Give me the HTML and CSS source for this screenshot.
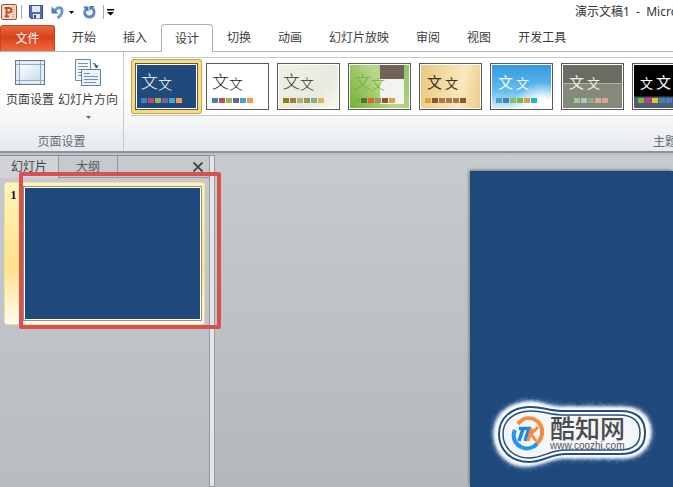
FILE: index.html
```
<!DOCTYPE html>
<html lang="zh-CN">
<head>
<meta charset="utf-8">
<title>演示文稿1</title>
<link rel="stylesheet" href="styles.css">
</head>
<body>
<header class="titlebar">
  <div class="quick">
    <svg class="app" width="16" height="18" viewBox="0 0 16 18" aria-hidden="true"><rect x=".5" y="1.500" width="15" height="15" rx="1.500" fill="#f7d9c8" stroke="#a44f3c"/><path d="M11 4h3M11 6.500h3M11 9h3M11 11.500h3M11 14h3" stroke="#ef9c74"/><path d="M2 3h9v12H2z" fill="#fbe6d6"/><path d="M5.500 13.500V5h2.500a2.300 2.300 0 0 1 0 4.600H5.500M3.500 13.500H8M3.500 5h2" fill="none" stroke="#c8481c" stroke-width="2"/></svg>
    <span class="rule"></span>
    <button class="tool save" aria-label="保存"><svg width="14" height="14" viewBox="0 0 14 14"><path d="M.5.5h13v13H2L.5 12z" fill="#5169b5" stroke="#3c4a93"/><path d="M3 1h8v6H3z" fill="#dfeafa"/><path d="M4 9h7v4.500H4z" fill="#e4e9f3"/><path d="M5 10h2v3.500H5z" fill="#34488c"/></svg></button>
    <button class="tool undo" aria-label="撤销"><svg width="13" height="14" viewBox="0 0 13 14"><path d="M4 5.500C6 2 11 1.500 11 6c0 3-2 5.500-4.500 7" fill="none" stroke="#6a97d6" stroke-width="3"/><path d="M.5 1.500v7h7z" fill="#4a7cc4"/></svg></button>
    <svg class="drop" width="5" height="3" viewBox="0 0 5 3" aria-hidden="true"><path d="M0 0h5L2.500 3z"/></svg>
    <button class="tool redo" aria-label="重复"><svg width="13" height="14" viewBox="0 0 13 14"><path d="M3 4C0 8 2.500 12 6.500 12c4.500 0 6-5 3-9" fill="none" stroke="#5a88cc" stroke-width="2.800"/><path d="M0 1.500h5.500V7z" fill="#4676bd"/><path d="M6.500 6V1h5z" fill="#4676bd"/></svg></button>
    <span class="rule"></span>
    <button class="tool" aria-label="自定义快速访问工具栏"><svg width="7" height="7" viewBox="0 0 7 7"><path d="M0 0h7v1.400H0zM0 3h7L3.500 6.500z"/></svg></button>
  </div>
  <h1 class="title">演示文稿1&nbsp; -&nbsp; Microsoft</h1>
</header>
<nav class="tabs">
  <button class="file">文件</button>
  <button class="tab">开始</button>
  <button class="tab">插入</button>
  <button class="tab active">设计</button>
  <button class="tab">切换</button>
  <button class="tab">动画</button>
  <button class="tab">幻灯片放映</button>
  <button class="tab">审阅</button>
  <button class="tab">视图</button>
  <button class="tab">开发工具</button>
</nav>
<section class="ribbon">
  <div class="group setup">
    <div class="commands">
      <button class="command"><svg width="30" height="26" viewBox="0 0 30 26" aria-hidden="true"><defs><linearGradient id="pg" x2="1" y2="1"><stop stop-color="#fff"/><stop offset="1" stop-color="#c9dced"/></linearGradient></defs><rect x=".5" y=".5" width="29" height="24" fill="#e3ecf5" stroke="#60788f"/><path d="M4.500 4.500h21v16h-21z" fill="url(#pg)"/><path d="M4.500 1v23M25.500 1v23M1 4.500h28M1 20.500h28" stroke="#8fabc6"/></svg><span>页面设置</span></button>
      <button class="command"><svg width="28" height="28" viewBox="0 0 28 28" aria-hidden="true"><path d="M1.500.5h15v21h-15z" fill="#f1f6fb" stroke="#6c88a6"/><path d="M4 4.500h10M4 7.500h10M4 10.500h4M4 13.500h3M4 16.500h3" stroke="#7796b8"/><path d="M7.500 10.500h19v16h-19z" fill="#eaf2fb" stroke="#6581a0"/><path d="M10 14.500h6M10 17.500h14M10 20.500h14M10 23.500h12" stroke="#7193b9"/><path d="M19 4.500q3 0 3.500 3" fill="none" stroke="#355c8d" stroke-width="1.200"/><path d="M20 6.500h5l-2.500 3z" fill="#355c8d"/></svg><span>幻灯片方向</span><svg class="drop" width="5" height="3" viewBox="0 0 5 3" aria-hidden="true"><path d="M0 0h5L2.500 3z" fill="#666"/></svg></button>
    </div>
    <div class="caption">页面设置</div>
  </div>
  <div class="group themes">
    <div class="gallery">
      <button class="theme selected"><span class="art navy"><span class="sample">文<small>文</small></span><span class="swatches"><i class="c1"></i><i class="c2"></i><i class="c3"></i><i class="c4"></i><i class="c5"></i><i class="c6"></i></span></span></button>
      <button class="theme"><span class="art white"><span class="sample">文<small>文</small></span><span class="swatches"><i class="c1"></i><i class="c2"></i><i class="c3"></i><i class="c4"></i><i class="c5"></i><i class="c6"></i></span></span></button>
      <button class="theme"><span class="art cream"><span class="sample">文<small>文</small></span><span class="swatches"><i class="olive"></i><i class="rust"></i><i class="sand"></i><i class="moss"></i><i class="sage"></i><i class="straw"></i></span></span></button>
      <button class="theme"><span class="art green"><span class="sample">文<small>文</small></span><span class="swatches"><i class="lime"></i><i class="slate"></i><i class="orange"></i><i class="moss"></i><i class="brown"></i><i class="gold"></i></span></span></button>
      <button class="theme"><span class="art tan"><span class="sample brush">文<small>文</small></span><span class="swatches"><i class="gold"></i><i class="brown"></i><i class="rust"></i><i class="rust"></i><i class="rust"></i><i class="brown"></i></span></span></button>
      <button class="theme"><span class="art sky"><span class="sample brush">文<small>文</small></span><span class="swatches"><i class="c5"></i><i class="c1"></i><i class="c3"></i><i class="lime"></i><i class="gold"></i><i class="aqua"></i></span></span></button>
      <button class="theme"><span class="art stone"><span class="sample brush">文<small>文</small></span><span class="swatches"><i class="fern"></i><i class="mint"></i><i class="mist"></i><i class="sage"></i><i class="peach"></i><i class="rose"></i></span></span></button>
      <button class="theme"><span class="art black"><span class="sample brush"><small>文</small>文</span><span class="swatches"><i class="lime"></i><i class="pink"></i><i class="yellow"></i><i class="c1"></i><i class="c1"></i><i class="c4"></i></span></span></button>
    </div>
    <div class="caption">主题</div>
  </div>
</section>
<main class="workspace">
  <aside class="pane">
    <div class="pane-tabs">
      <button class="pane-tab current">幻灯片</button>
      <button class="pane-tab">大纲</button>
      <button class="close" aria-label="关闭"><svg width="10" height="10" viewBox="0 0 10 10"><path d="M.5.5l9 9M9.500.5l-9 9" stroke="#414447" stroke-width="1.800"/></svg></button>
    </div>
    <div class="slide-item">
      <span class="number">1</span>
      <div class="thumb"></div>
      <div class="marker"></div>
    </div>
  </aside>
  <div class="splitter"></div>
  <div class="canvas">
    <div class="slide"></div>
  </div>
  <div class="watermark">
    <svg class="halo" width="180" height="84" viewBox="0 0 180 84" aria-hidden="true">
      <defs><filter id="spray" x="-10%" y="-20%" width="120%" height="140%"><feTurbulence type="fractalNoise" baseFrequency=".7" numOctaves="2" seed="4" result="n"/><feDisplacementMap in="SourceGraphic" in2="n" scale="14" xChannelSelector="R" yChannelSelector="G"/><feGaussianBlur stdDeviation=".8"/></filter>
      <filter id="soft" x="-10%" y="-20%" width="120%" height="140%"><feGaussianBlur stdDeviation="1.500"/></filter></defs>
      <path d="M40 10C54 8 62 15 76 15h60c19 0 29 11 29 25s-10 26-29 26H78c-12 0-24 8-38 8C21 74 8 60 8 42S21 12 40 10z" fill="#a9c0e2" stroke="#8ba8d2" stroke-opacity=".5" stroke-width="5" filter="url(#spray)"/>
      <path d="M40 10C54 8 62 15 76 15h60c19 0 29 11 29 25s-10 26-29 26H78c-12 0-24 8-38 8C21 74 8 60 8 42S21 12 40 10z" fill="#fff" filter="url(#soft)"/>
      <g fill="none" stroke="#244d84" stroke-width="2"><path d="M42 15C55 14 62 19 76 19h58c17 0 25 8 25 22s-8 21-25 21H80c-15 0-24 8-37 8C25 70 13 58 13 42S25 16 42 15z"/><path d="M43 19c12-1 20 4 33 4h57c14 0 21 6 21 18s-7 17-21 17H79c-14 0-23 8-36 8C28 66 17 56 17 42s11-22 26-23z" fill="#f4f6fa" stroke-width="1.500"/></g>
      <g fill="none"><path d="M32 32C41 20 58 28 56 42c-1 5-3 8-6 10" stroke="#f58a42" stroke-width="4"/><path d="M29 38c-3 6-1 13 6 17 6 3 12 1 16-3" stroke="#2196f3" stroke-width="4"/><path d="M33 36.500h10l-4 12.500M37 37l-4 12" stroke="#1987e8" stroke-width="3.500"/><path d="M52 35l-7 7 5 7M45.500 36L42 49" stroke="#f58a42" stroke-width="3"/></g>
    </svg>
    <div class="brand"><strong>酷知网</strong><a href="#">www.coozhi.com</a></div>
  </div>
</main>
</body>
</html>
```
FILE: styles.css
```
* { box-sizing: border-box; }
html, body { height: 100%; }
body {
  margin: 0;
  display: flex;
  flex-direction: column;
  overflow: hidden;
  background: #fff;
  color: #3c3c3c;
  font: 12px/16px "Noto Sans", "Noto Sans CJK SC", sans-serif;
}
button { margin: 0; padding: 0; border: 0; background: none; color: inherit; font: inherit; white-space: nowrap; }
svg { display: block; flex: none; }

.titlebar { display: flex; flex: none; height: 24px; align-items: center; justify-content: space-between; overflow: hidden; }
.quick { display: flex; flex: none; align-items: center; padding-left: 1px; }
.rule { width: 1px; height: 14px; margin: 0 7px 0 4px; background: #aaa; }
.undo { margin-left: 8px; }
.quick .drop { margin: 0 9px 0 5px; }
.redo + .rule { margin: 0 3px 0 7px; }
.title { flex: none; width: 98px; margin: 0; color: #333; font-size: 12px; font-weight: 400; white-space: nowrap; }

.tabs { display: flex; flex: none; gap: 1px; height: 28px; border-bottom: 1px solid #b3b5b9; }
.file { width: 55px; margin: 1px 3px 0 0; border: 1px solid #c44522; border-bottom: 0; border-radius: 3px 3px 0 0; background: linear-gradient(#e86b40, #da401b 45%, #f0693b); color: #fff; }
.tab { padding: 0 13px; }
.tab.active { height: 28px; border: 1px solid #aeb1b6; border-bottom: 0; border-radius: 4px 4px 0 0; background: #fff; }

.ribbon { display: flex; flex: none; height: 101px; overflow: hidden; background: linear-gradient(#fff 45%, #e6e9ed); border-bottom: 2px solid #8e949c; }
.group { display: flex; flex: none; flex-direction: column; justify-content: space-between; }
.setup { width: 124px; border-right: 1px solid #c7cbd0; }
.themes { width: 1075px; padding: 5px 0 0 7px; }
.caption { color: #626b76; text-align: center; padding-bottom: 1px; }
.commands { display: flex; gap: 4px; padding: 7px 0 0 6px; }
.command { display: flex; flex-direction: column; align-items: center; }
.command svg { height: 28px; }
.command span { margin-top: 5px; }
.command .drop { height: 3px; margin-top: 8px; }
.gallery { display: flex; height: 59px; align-items: center; gap: 1px; border: 1px solid #c6c9ce; border-width: 1px 0; background: #fff; }
.theme { flex: none; padding: 4px; margin-right: -1px; border-radius: 3px; }
.theme.selected { background: #f7dc79; box-shadow: inset 0 0 0 1px #c9a950; }
.art { display: flex; flex-direction: column; justify-content: space-between; width: 63px; height: 47px; padding: 5px 5px 6px; border: 1px solid #5a5a5a; box-shadow: inset 0 0 0 1px #fff; text-align: left; }
.sample { display: flex; align-items: flex-end; height: 26px; font-size: 17px; line-height: 26px; font-weight: 300; }
.sample small { font-size: 14px; line-height: 23px; }
.brush { padding-left: 2px; gap: 3px; font-size: 15px; font-weight: 400; }
.brush small { font-size: 13px; }
.swatches { display: flex; gap: 1px; }
.swatches i { width: 6px; height: 5px; }
.navy { background: #20497c; color: #fff; }
.white { background: #fff; color: #222; }
.cream { background: linear-gradient(135deg, #f0f0e7, #e9e9dd 65%, #f9f9f2); color: #333; }
.green { background: linear-gradient(#706259, #706259) 31px 1px / 24px 14px no-repeat, linear-gradient(#f3f4f0, #f3f4f0) 31px 15px / 24px 25px no-repeat, linear-gradient(60deg, #77ae35, #b8d98b 55%, #91c15a); color: #75b239; }
.tan { background: linear-gradient(100deg, #e9c77e, #fae9bc 65%, #ebcb87); color: #42311c; }
.sky { background: radial-gradient(ellipse at 85% 112%, #fff 20%, transparent 45%), linear-gradient(#3299df, #65bdec 60%, #d9f2fc); color: #f0fbff; }
.stone { background: linear-gradient(#696c60 42%, #b3b5a6 42% 44%, #85887a 44%); color: #eeeede; }
.black { background: linear-gradient(#000 70%, #4d5d79 75%); color: #fff; }
.art.navy, .art.white, .art.cream, .art.green, .art.tan, .art.sky, .art.stone, .art.black { background-clip: padding-box; }
.c1 { background: #4381b8; } .c2 { background: #bd4c59; } .c3 { background: #92b954; }
.c4 { background: #7b5c9f; } .c5 { background: #40a5ca; } .c6 { background: #ef9850; }
.olive { background: #858020; } .rust { background: #ad774e; } .sand { background: #b4ac82; }
.moss { background: #9a9653; } .sage { background: #8bac91; } .straw { background: #d6b955; }
.lime { background: #77bb32; } .slate { background: #596851; } .orange { background: #de652d; }
.brown { background: #925430; } .gold { background: #dda342; } .aqua { background: #22bac5; }
.fern { background: #779467; } .mint { background: #9ec7a1; } .mist { background: #aac7c8; }
.peach { background: #d4b194; } .rose { background: #d7a49c; } .pink { background: #cc3486; } .yellow { background: #e3c52b; }

.workspace { position: relative; display: flex; flex: 1; min-height: 0; border-top: 2px solid #bcc1c7; background: #c3c6ca; }
.pane { flex: none; width: 209px; background: linear-gradient(#c6c9cd, #b9bcc0); }
.pane-tabs { display: flex; height: 23px; border-top: 1px solid #888f97; border-bottom: 1px solid #91979e; }
.pane-tab { width: 59px; border-right: 1px solid #91979e; color: #555b61; }
.current { height: 22px; background: #d1d3d6; color: #3d4247; }
.close { margin: 0 6px 0 auto; }
.slide-item { position: relative; display: flex; gap: 6px; margin: 4px 4px 0; padding: 4px 3px 4px 4px; border: 1px solid #ecdda1; border-radius: 3px; background: linear-gradient(#fff4bb, #ffe18a 60%, #fffbed); }
.number { width: 9px; color: #111; font: bold 12px/16px "Liberation Serif", serif; text-align: center; }
.thumb { flex: 1; aspect-ratio: 4 / 3; background: #20497b; border: 1px solid #fff; outline: 1px solid #98916d; }
.marker { position: absolute; inset: -11px -17px -5px 14px; border: 4px solid #d9504f; border-radius: 2px; z-index: 2; }
.splitter { flex: none; width: 6px; border: 1px solid #949a9f; background: #e4e7e9; }
.canvas { display: flex; flex: 1; padding: 16px 0 0 255px; background: linear-gradient(#c7cace, #b5b8bb); }
.slide { flex: 1; background: #20497b; box-shadow: -1px -1px 3px #73777b; }
.watermark { position: absolute; right: 7px; bottom: 11px; }
.brand { position: absolute; left: 64px; top: 23px; display: flex; flex-direction: column; color: #4c4b4b; }
.brand strong { font-size: 25px; line-height: 26px; font-weight: 500; }
.brand a { color: #555; font: 10px/10px "Liberation Sans", sans-serif; text-decoration: none; }
```
